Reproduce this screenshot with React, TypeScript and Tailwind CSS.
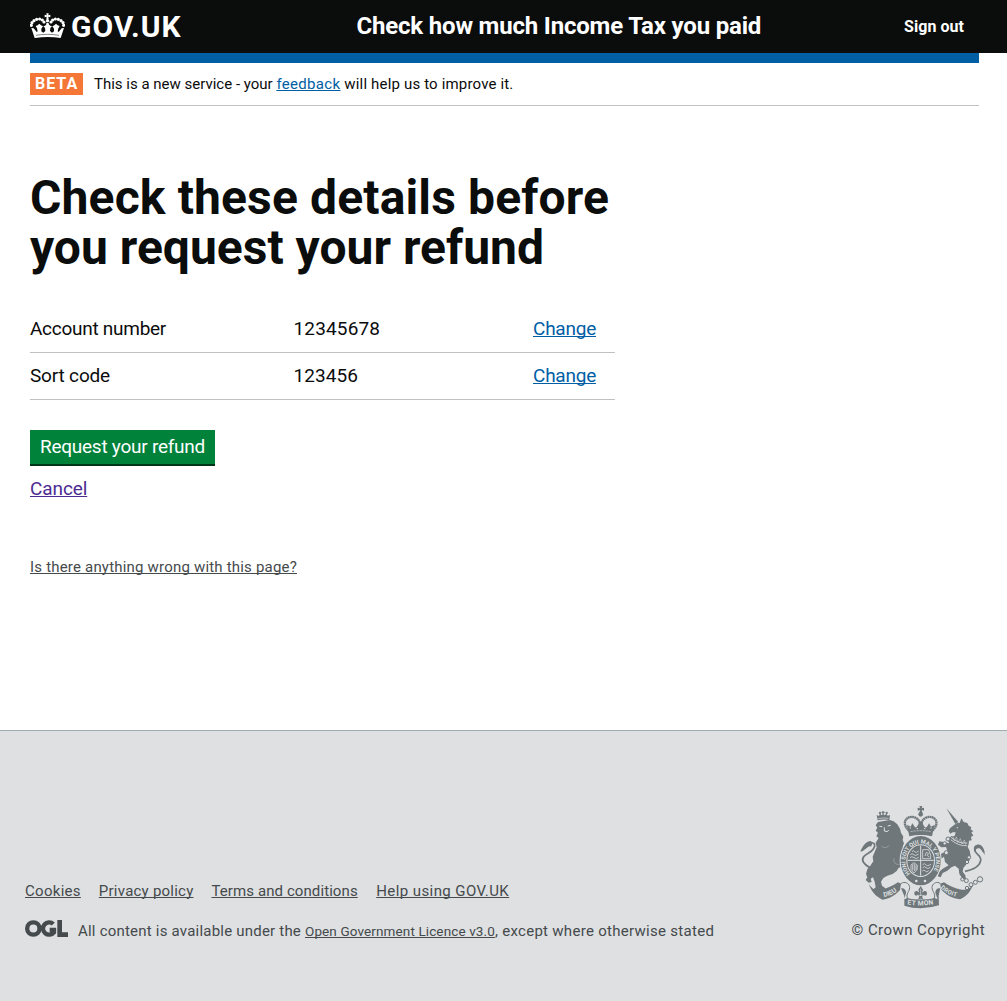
import type { ReactNode } from "react";

const INK = "#6f777b";
const PAPER = "#dee0e2";

function CrownLogo() {
  const beads = [[4, 37], [6, 29], [12, 23], [20, 19], [29, 18], [37, 21], [42, 27]];
  return (
    <svg className="mb-[2px] h-[26px] w-[35px] shrink-0" viewBox="0 0 105 78" fill="#fff" aria-hidden="true">
      <path d="M49 1h7l-1 6 6-2v8l-6-2 1 8h-7l1-8-6 2V5l6 2z" />
      <circle cx="52.500" cy="23" r="5" />
      <circle cx="52.500" cy="33" r="4" />
      {beads.map(([x, y]) => (
        <g key={`${x}-${y}`}>
          <circle cx={x} cy={y} r="4.800" />
          <circle cx={105 - x} cy={y} r="4.800" />
        </g>
      ))}
      <path d="M14 75 4 45l7 1 9 11 3-2-2-9-4-7 6-2 5-5 5 5 6 3-5 7v8l6 4 6-5-1-9-5-5 5-2 8-7 8 7 5 2-5 5-1 9 6 5 6-4v-8l-5-7 6-3 5-5 5 5 6 2-4 7-2 9 3 2 9-11 7-1-10 30c-25-4-52-4-77 0z" />
      <path d="M18 67c23-4 46-4 69 0" fill="none" stroke="#0b0c0c" strokeWidth="1.500" />
    </svg>
  );
}

function RoyalArms() {
  return (
    <svg className="h-[104px] w-[125px]" viewBox="30 15 375 312" fill={INK} fontFamily="Roboto, sans-serif" fontWeight="700" aria-hidden="true">
      <defs>
        <path id="garter" d="M181 221A46 52 0 1 1 243 221" />
        <path id="ribbon-left" d="M102 291c20-3 36-13 50-27" />
        <path id="ribbon-mid" d="M172 313q41 7 83-1" />
        <path id="ribbon-right" d="M271 264c12 13 32 24 60 29" />
      </defs>

      {/* Lion: crown, mane, body and tail */}
      <path d="m83 61-3-16 7 3 3-7 5 5 4-5 5 5 5-5 4 6 7-2-2 15c-12-3-23-2-35 1z" />
      <path d="M99 42v-9m-4 4h9" stroke={INK} strokeWidth="3.500" />
      <circle cx="90" cy="39" r="3.500" /><circle cx="110" cy="39" r="3.500" />
      <path d="M84 56q16-4 31-1" stroke={PAPER} strokeWidth="2" fill="none" />
      <path d="M84 66 119 60 131 64 142 73 150 86 153 98 160 110 158 120 162 130 158 140 160 156 170 166 168 180 152 181 160 190 158 200 146 203 140 213 128 222 112 227 100 234 93 245 96 257 106 265 106 275 78 277 68 270 77 262 74 245 69 232 62 236 65 246 56 248 47 240 52 232 48 222 52 208 62 196 70 184 68 170 74 156 80 142 77 128 86 114 79 109 84 98 77 92 82 83 77 75z" />
      <path d="m88 79 9 1m16-2 9-2M103 82v11l9 2 4-5" fill="none" stroke={PAPER} strokeWidth="3" />
      <path d="M94 138c8 7 16 6 24-2m14 39c-3 14 6 21 22 17" fill="none" stroke={PAPER} strokeWidth="1" />
      <path d="M60 203C40 192 32 180 42 169c12-11 29-14 32-31 1-10-10-12-16-5-6 8-10 12-20 14" fill="none" stroke={INK} strokeWidth="5" />
      <path d="M31 154c7-15 16-29 29-31 8 0 8 10 3 17-7-3-12 2-17 7-4 4-10 8-15 7z" />

      {/* Unicorn: horn, head, collar, body and tail */}
      <path d="m289 25 36 41-9 6z" />
      <path d="M323 68 329 69 334 55 341 66 352 69 356 77 364 82 362 88 370 94 364 97 370 107 363 110 365 121 357 122 356 132 353 141 359 152 362 168 358 182 348 194 340 204 338 215 346 226 348 238 338 236 328 222 326 206 315 197 304 202 292 212 278 219 272 232 263 229 267 216 278 206 296 196 285 186 282 170 272 178 265 176 272 162 292 152 288 141 274 142 264 134 268 124 284 127 297 130 294 118 304 108 314 108 317 97 308 97 301 101 296 93 300 85 312 75z" />
      <circle cx="322" cy="83" r="2" fill={PAPER} />
      <path d="M303 112q22 20 49 17M302 119q24 20 49 18" fill="none" stroke={PAPER} strokeWidth="2.500" />
      <path d="m308 108 5 14 6-11 5 16 7-11 5 16 7-12 4 14" fill="none" stroke={PAPER} strokeWidth="1.500" />
      <path d="M345 214c26-5 44-16 47-32 4-17-19-20-18-34 1-10 9-14 15-9 4 4 7 10 13 18" fill="none" stroke={INK} strokeWidth="5" />
      <path d="M404 165c-7-15-12-20-20-20-6 1-8 6-5 12-9-5-10-16-2-21 14-9 28 7 27 29z" />
      <g fill={PAPER} stroke={INK} strokeWidth="3">
        <circle cx="294" cy="117" r="6" /><circle cx="284" cy="130" r="5" />
        <circle cx="289" cy="158" r="6" /><circle cx="357" cy="172" r="5" />
        <circle cx="351" cy="186" r="5" />
        <circle cx="337" cy="238" r="5" /><circle cx="349" cy="242" r="6" />
        <circle cx="351" cy="264" r="5" /><circle cx="363" cy="254" r="6" />
        <circle cx="376" cy="247" r="6" /><circle cx="390" cy="238" r="8" />
      </g>

      {/* Imperial crown */}
      <path d="M208 18h9l-2 7 7-2v9l-7-2 2 9h-9l2-9-7 2v-9l7 2z" />
      <circle cx="212" cy="43" r="7" />
      <path d="M177 92C149 66 174 42 198 54c11 6 13 17 14 35 1-18 3-29 14-35 24-12 49 12 21 38" fill="none" stroke={INK} strokeWidth="7" strokeDasharray="5.500 1" />
      <path d="m174 91-3-17 11 6 5-10 7 10 4 3 6-8 4-10h9l3 10 6 8 5-3 6-10 6 10 11-6-4 16-4 19q-34-8-68 0z" />
      <path d="M182 95q30-6 61 0" fill="none" stroke={PAPER} strokeWidth="2" strokeDasharray="6 3" />
      <path d="M179 84h4m17 2h4m18 0h4m15-2h4" stroke={PAPER} strokeWidth="3" />

      {/* Garter and quartered shield */}
      <ellipse cx="212" cy="182" rx="63" ry="77" fill={PAPER} />
      <ellipse cx="212" cy="182" rx="60" ry="74" />
      <ellipse cx="212" cy="182" rx="43" ry="49" fill={PAPER} />
      <ellipse cx="212" cy="182" rx="40" ry="46" />
      <path d="M212 137v90M173 181h78" stroke={PAPER} strokeWidth="3" />
      <g fill="none" stroke={PAPER} strokeWidth="2.400">
        <path d="M186 155q4-6 8 0t12-2M181 164q5-6 10 0t15-2M180 173q5-6 12 0t14-1" />
        <path d="M218 149h18l6 17v10h-24zM225 168l4-11 7 4-5 5 7 5" />
        <path d="m192 188 10 8-1 13-9 10-9-11v-13zM188 193v17m5-18v21m5-17v14" />
        <path d="M218 194q5-6 9 0t16-1M218 203q5-6 10 0t13-1M217 213q5-6 9 0t10-1" />
      </g>
      <circle cx="199" cy="243" r="4" fill={PAPER} /><circle cx="225" cy="243" r="4" fill={PAPER} />
      <text fill={PAPER} fontSize="17">
        <textPath href="#garter">HONI SOIT QUI MAL Y PENSE</textPath>
      </text>

      {/* Motto ribbon */}
      <path d="M57 252c8 14 19 21 35 17 20-4 36-11 52-22l9 4-3 19c-15 16-31 27-53 29-20-10-34-25-40-47z" />
      <path d="M370 251c-7 14-20 20-35 18-21-4-38-11-53-22l-11 4 2 17c14 17 35 28 57 30 22-11 33-25 40-47z" />
      <path d="M150 254c9-11 22-7 27 1 6 11-4 21-6 30-1 10 4 14 10 15h62c7-1 12-5 11-15-2-9-12-19-6-30 5-8 18-12 26-1" fill="none" stroke={INK} strokeWidth="3" />
      <path d="M153 265c9-2 16 5 15 14l-6 20 9-5q41 12 83 0l9 4-7-20c0-9 6-15 15-13l-5 22 1 29q-55 17-104 1v-29z" />
      <text fill={PAPER} fontSize="20"><textPath href="#ribbon-left">DIEU</textPath></text>
      <text fill={PAPER} fontSize="20" letterSpacing="1"><textPath href="#ribbon-mid">ET MON</textPath></text>
      <text fill={PAPER} fontSize="18" letterSpacing="1"><textPath href="#ribbon-right">DROIT</textPath></text>

      {/* Fleur and thistle badge */}
      <path d="m212 258 7 11-3 9c8-9 16-5 15 3-1 6-7 8-10 3-2 4-3 5-5 6l4 8-8-2-8 2 4-8-5-6c-3 5-9 3-10-3-1-8 7-12 15-3l-3-9z" />
      <path d="M212 266v22m-8-2h17" stroke={PAPER} strokeWidth="2" />
    </svg>
  );
}

function OglMark() {
  return (
    <svg className="h-[17px] w-[43px] shrink-0" viewBox="0 0 129 51" fill="none" stroke="#454a4c" aria-hidden="true">
      <circle cx="25" cy="25.500" r="18.500" strokeWidth="13" />
      <path d="M85 12a18.500 18.500 0 1 0 2 25V30H74" strokeWidth="13" />
      <path d="M104 0v44h25" strokeWidth="14" />
    </svg>
  );
}

function Link({ className = "", children }: { className?: string; children: ReactNode }) {
  return (
    <a href="#" className={`underline decoration-1 [text-decoration-skip-ink:none] ${className}`}>
      {children}
    </a>
  );
}

function DetailRow({ label, labelClass, value, valueClass }: { label: string; labelClass: string; value: string; valueClass: string }) {
  return (
    <div className="grid grid-cols-[263.5px_239.5px_1fr] border-b border-[#bfc1c3] pt-[10px] pb-[11px] text-[19px] leading-[25px]">
      <dt className={labelClass}>{label}</dt>
      <dd className={valueClass}>{value}</dd>
      <dd>
        <Link className="tracking-[-0.234px] text-[#005ea5]">Change</Link>
      </dd>
    </div>
  );
}

export default function App() {
  return (
    <div className="flex h-[1001px] flex-col bg-white font-['Roboto',sans-serif] text-[#0b0c0c]">
      <header className="flex h-[53px] items-center bg-[#0b0c0c] pl-[30px] font-bold whitespace-nowrap text-white">
        <a href="#" className="flex w-[326.5px] items-center gap-[6px]">
          <CrownLogo />
          <span className="text-[30px] leading-[30px] tracking-[0.95px]">GOV.UK</span>
        </a>
        <span className="w-[547.5px] pb-[1px] text-[24px] leading-[30px] tracking-[-0.185px]">Check how much Income Tax you paid</span>
        <a href="#" className="text-[16px] leading-[20px] tracking-[0.05px]">Sign out</a>
      </header>

      <main className="mr-[28px] ml-[30px] flex-1">
        <div className="h-[10px] bg-[#005ea5]" />
        <div className="flex items-center border-b border-[#bfc1c3] py-[10px]">
          <strong className="mr-[11px] h-[22px] w-[53px] bg-[#f47738] pl-[5px] text-[16px] leading-[22px] tracking-[1px] text-white">BETA</strong>
          <p className="text-[15px] leading-[20px] whitespace-pre">
            <span>{"This is a new service - your "}</span>
            <Link className="tracking-[0.33px] text-[#005ea5]">feedback</Link>
            <span className="tracking-[0.165px]">{" will help us to improve it."}</span>
          </p>
        </div>

        <h1 className="mt-[67px] text-[48px] leading-[50px] font-bold">
          <span className="block tracking-[0.14px]">Check these details before</span>
          <span className="block tracking-[0.01px]">you request your refund</span>
        </h1>

        <dl className="mt-[33px] w-[585px]">
          <DetailRow label="Account number" labelClass="tracking-[-0.273px]" value="12345678" valueClass="tracking-[0.15px]" />
          <DetailRow label="Sort code" labelClass="tracking-[-0.169px]" value="123456" valueClass="tracking-[0.05px]" />
        </dl>

        <button className="mt-[30px] block h-[36px] w-[185px] border-b-2 border-[#003618] bg-[#00823b] text-[19px] leading-[34px] tracking-[-0.253px] text-white">
          Request your refund
        </button>
        <div className="mt-[10px] text-[19px] leading-[25px]">
          <Link className="tracking-[-0.1px] text-[#4c2c92]">Cancel</Link>
        </div>
        <div className="mt-[56px] text-[15px] leading-[20px]">
          <Link className="tracking-[0.195px] text-[#454a4c]">Is there anything wrong with this page?</Link>
        </div>
      </main>

      <footer className="flex h-[271px] justify-between border-t border-[#a1acb2] bg-[#dee0e2] pr-[22px] pl-[25px] text-[15px] leading-[20px] whitespace-nowrap text-[#454a4c]">
        <div className="pt-[150px]">
          <nav className="flex">
            <Link className="mr-[18px] tracking-[0.29px]">Cookies</Link>
            <Link className="mr-[18px] tracking-[0.23px]">Privacy policy</Link>
            <Link className="mr-[18.5px] tracking-[0.09px]">Terms and conditions</Link>
            <Link className="tracking-[0.416px]">Help using GOV.UK</Link>
          </nav>
          <div className="mt-[19px] flex items-center">
            <div className="mr-[10px] pb-[5px]">
              <OglMark />
            </div>
            <p className="whitespace-pre">
              <span className="tracking-[0.212px]">{"All content is available under the "}</span>
              <Link className="text-[13.5px] tracking-[0.12px]">Open Government Licence v3.0</Link>
              <span className="tracking-[0.29px]">, except where otherwise stated</span>
            </p>
          </div>
        </div>
        <div className="flex flex-col items-end pt-[74px]">
          <RoyalArms />
          <a href="#" className="mt-[11px] tracking-[0.43px]">© Crown Copyright</a>
        </div>
      </footer>
    </div>
  );
}
